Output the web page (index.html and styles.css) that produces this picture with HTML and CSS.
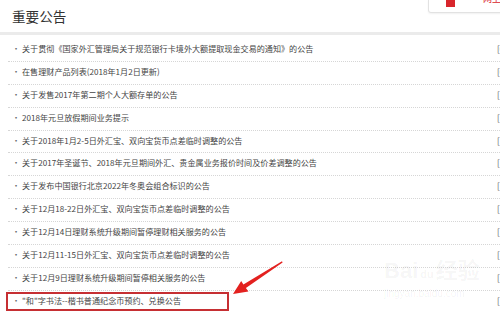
FILE: index.html
```html
<!DOCTYPE html>
<html>

<head>
  <meta charset="UTF-8">
  <title>重要公告</title>
  <link rel="stylesheet" href="styles.css">
</head>

<body>
  <div class="page">
    <div class="head">
      <h3 class="head-title">重要公告</h3>
      <div class="head-btn">
        <span class="head-icon"></span>
        <span class="head-text">网上银行</span>
      </div>
    </div>
    <ul class="news">
      <li class="news-item"><span class="news-title">关于贯彻《国家外汇管理局关于规范银行卡境外大额提取现金交易的通知》的公告</span><span class="news-date">[01-03]</span></li>
      <li class="news-item"><span class="news-title">在售理财产品列表(2018年1月2日更新)</span><span class="news-date">[01-02]</span></li>
      <li class="news-item"><span class="news-title">关于发售2017年第二期个人大额存单的公告</span><span class="news-date">[12-29]</span></li>
      <li class="news-item"><span class="news-title">2018年元旦放假期间业务提示</span><span class="news-date">[12-28]</span></li>
      <li class="news-item"><span class="news-title">关于2018年1月2-5日外汇宝、双向宝货币点差临时调整的公告</span><span class="news-date">[12-28]</span></li>
      <li class="news-item"><span class="news-title">关于2017年圣诞节、2018年元旦期间外汇、贵金属业务报价时间及价差调整的公告</span><span class="news-date">[12-22]</span></li>
      <li class="news-item"><span class="news-title">关于发布中国银行北京2022年冬奥会组合标识的公告</span><span class="news-date">[12-15]</span></li>
      <li class="news-item"><span class="news-title">关于12月18-22日外汇宝、双向宝货币点差临时调整的公告</span><span class="news-date">[12-15]</span></li>
      <li class="news-item"><span class="news-title">关于12月14日理财系统升级期间暂停理财相关服务的公告</span><span class="news-date">[12-12]</span></li>
      <li class="news-item"><span class="news-title">关于12月11-15日外汇宝、双向宝货币点差临时调整的公告</span><span class="news-date">[12-08]</span></li>
      <li class="news-item"><span class="news-title">关于12月9日理财系统升级期间暂停相关服务的公告</span><span class="news-date">[12-07]</span></li>
      <li class="news-item"><span class="news-title">"和"字书法--楷书普通纪念币预约、兑换公告</span><span class="news-date">[12-05]</span></li>
    </ul>

    <!-- 标注：红框 + 箭头 -->
    <div class="mark-box"></div>
    <svg class="mark-arrow" width="500" height="313" viewBox="0 0 500 313">
      <polygon fill="#e3211f" points="233,294 241.2,281 243.4,284.4 282,261.3 282.6,262.4 245.9,288.1 248.4,291.6" />
    </svg>

    <div class="watermark">
      <div class="wm-logo">Bai<span class="wm-du">du</span>经验</div>
      <div class="wm-url">jingyan.baidu.com</div>
    </div>
  </div>
</body>

</html>
```

FILE: styles.css
```css
body {
  margin: 0;
  background: #fff;
  font-family: "Noto Sans CJK SC", "Liberation Sans", sans-serif;
  overflow: hidden;
}

.page {
  position: relative;
  width: 500px;
  height: 313px;
  overflow: hidden;
}

.head {
  display: flex;
  justify-content: space-between;
  align-items: flex-start;
  height: 32px;
  border-bottom: 3px solid #ebebeb;
}

.head-title {
  margin: 0;
  padding-left: 12px;
  font-size: 13.6px;
  font-weight: normal;
  line-height: 32px;
  color: #333;
}

.head-btn {
  display: flex;
  align-items: flex-start;
  flex: none;
  width: 80px;
  height: 12px;
  margin-right: -10px;
  border: 1px solid #e2e2e2;
  border-top: none;
  border-radius: 0 0 0 3px;
  box-shadow: 0 1px 2px rgba(0, 0, 0, 0.06);
  overflow: hidden;
}

.head-icon {
  flex: none;
  width: 9px;
  height: 7px;
  margin-left: 17px;
  background: #d8262c;
}

.head-text {
  flex: none;
  margin-left: 28px;
  margin-top: -7px;
  font-size: 9px;
  line-height: 12px;
  color: #d8262c;
  white-space: nowrap;
}

.news {
  list-style: none;
  margin: 4px 0 0 8px;
  padding: 0;
  width: 540px;
}

.news-item {
  display: flex;
  box-sizing: border-box;
  height: 22.9px;
  padding-left: 4px;
  padding-bottom: 2px;
  border-bottom: 1px dotted #d6d6d6;
  font-size: 8.1px;
  line-height: 20px;
  color: #444;
  white-space: nowrap;
}

.news-item::before {
  content: "·";
  width: 10px;
  color: #666;
}

.news-title {
  flex: 1;
}

.news-date {
  width: 51px;
  color: #666;
}

.mark-box {
  position: absolute;
  left: 6px;
  top: 292px;
  width: 219px;
  height: 15px;
  border: 2px solid #c62f33;
}

.mark-arrow {
  position: absolute;
  left: 0;
  top: 0;
}

.watermark {
  position: absolute;
  left: 384px;
  top: 258px;
  color: rgba(0, 0, 0, 0.05);
  font-family: "Liberation Sans", "Noto Sans CJK SC", sans-serif;
}

.wm-logo {
  font-size: 22px;
  font-weight: bold;
  line-height: 26px;
}

.wm-du {
  font-size: 11px;
  margin: 0 2px;
}

.wm-url {
  font-size: 10px;
  line-height: 14px;
}
```
